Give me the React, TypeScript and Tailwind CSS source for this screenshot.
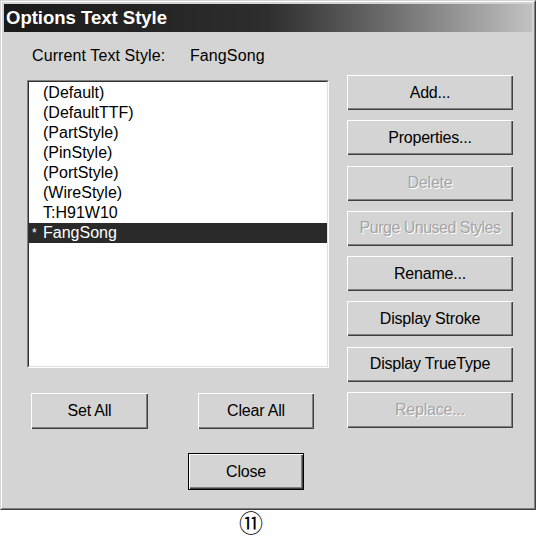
import React from "react";

const raised =
  "shadow-[inset_1px_1px_0_#ffffff,inset_-1px_-1px_0_#404040,inset_-2px_-2px_0_#808080]";

function Btn({
  label,
  disabled,
  className,
}: {
  label: string;
  disabled?: boolean;
  className?: string;
}) {
  return (
    <div
      className={`flex items-center justify-center bg-[#d4d4d4] text-[16px] leading-none tracking-[-0.2px] ${raised} ${
        disabled
          ? "text-[#a4a4a4] [text-shadow:1px_1px_0_#ffffff]"
          : "text-black"
      } ${className ?? ""}`}
    >
      {label}
    </div>
  );
}

const items = [
  "(Default)",
  "(DefaultTTF)",
  "(PartStyle)",
  "(PinStyle)",
  "(PortStyle)",
  "(WireStyle)",
  "T:H91W10",
];

export default function App() {
  return (
    <div
      className="w-[536px] h-[538px] bg-white flex flex-col"
      style={{ fontFamily: '"Liberation Sans", Arial, sans-serif' }}
    >
      {/* dialog window */}
      <div className="w-[536px] h-[510px] border border-t-[#d4d4d4] border-l-[#d4d4d4] border-r-[#404040] border-b-[#404040]">
        <div className="h-full border border-t-white border-l-white border-r-[#808080] border-b-[#808080] p-[2px] bg-[#d4d4d4] flex flex-col">
          {/* title bar */}
          <div className="h-[28px] bg-linear-to-r from-[#1a1a1a] via-[#2e2e2e] to-[#c2c2c2] flex items-center pl-[2px]">
            <span className="text-white font-bold text-[18.5px] leading-none">
              Options Text Style
            </span>
          </div>

          {/* current style label */}
          <div className="mt-[14px] h-[20px] flex items-center text-[16px] tracking-[0.1px] text-black pl-[28px]">
            <span className="w-[158px]">Current Text Style:</span>
            <span>FangSong</span>
          </div>

          {/* main area */}
          <div className="mt-[9px] flex pl-[23px]">
            {/* left column */}
            <div className="w-[302px] flex flex-col">
              <div className="mt-[5px] h-[288px] border border-t-[#808080] border-l-[#808080] border-r-white border-b-white">
                <div className="h-full border border-t-[#303030] border-l-[#303030] border-r-[#e0e0e0] border-b-[#e0e0e0] bg-white pt-[1px]">
                  {items.map((t) => (
                    <div
                      key={t}
                      className="h-[20px] flex items-center text-[16px] text-black pl-[14px]"
                    >
                      {t}
                    </div>
                  ))}
                  <div className="h-[20px] flex items-center text-[16px] bg-[#2a2a2a] text-white pl-[3px]">
                    <span className="w-[11px] text-[12px] self-start mt-[1px]">
                      *
                    </span>
                    <span>FangSong</span>
                  </div>
                </div>
              </div>
              <div className="mt-[25px] flex">
                <Btn label="Set All" className="ml-[4px] w-[117px] h-[36px]" />
                <Btn label="Clear All" className="ml-[50px] w-[116px] h-[36px]" />
              </div>
            </div>

            {/* right column */}
            <div className="ml-[18px] w-[166px] flex flex-col gap-[10.3px]">
              <Btn label="Add..." className="h-[35px]" />
              <Btn label="Properties..." className="h-[35px]" />
              <Btn label="Delete" disabled className="h-[35px]" />
              <Btn label="Purge Unused Styles" disabled className="h-[35px] tracking-[-0.5px]" />
              <Btn label="Rename..." className="h-[35px]" />
              <Btn label="Display Stroke" className="h-[35px]" />
              <Btn label="Display TrueType" className="h-[35px]" />
              <Btn label="Replace..." disabled className="h-[36px]" />
            </div>
          </div>

          {/* close */}
          <div className="mt-[24px] pl-[184px]">
            <div className="w-[116px] h-[37px] border border-black">
              <Btn label="Close" className="w-full h-full" />
            </div>
          </div>
        </div>
      </div>

      {/* figure number */}
      <div className="h-[28px] flex items-center pl-[235px]">
        <div
          className="w-[32px] h-[27px] flex items-center justify-center text-[24px] leading-[27px] text-black"
          style={{ fontFamily: '"DejaVu Sans", "Noto Sans CJK SC", sans-serif' }}
        >
          ⑪
        </div>
      </div>
    </div>
  );
}
